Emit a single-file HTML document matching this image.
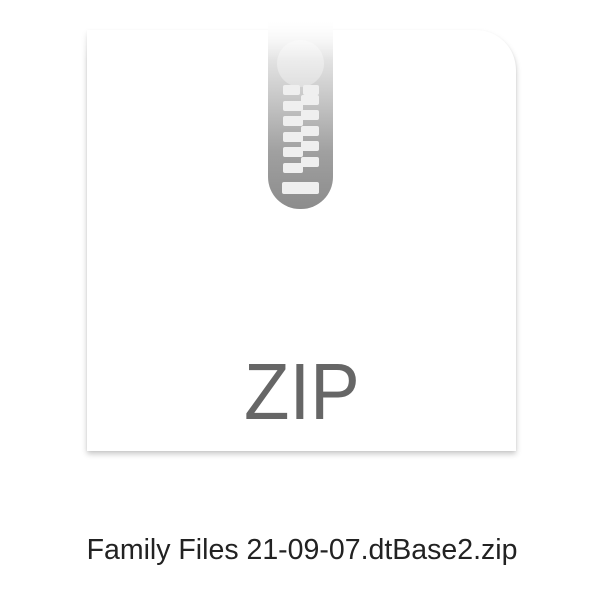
<!DOCTYPE html>
<html><head><style>
body{margin:0;width:600px;height:600px;background:#fff;position:relative;overflow:hidden;font-family:"Liberation Sans",sans-serif}
.page{position:absolute;left:87px;top:30px;width:429px;height:421px;background:#fff;border-top-right-radius:40px;box-shadow:0 3px 6px rgba(0,0,0,0.22),0 0 2px rgba(0,0,0,0.06)}
.fade{position:absolute;left:80px;top:0;width:445px;height:60px;background:linear-gradient(#fff 20%,rgba(255,255,255,0))}
.zip{position:absolute;left:268px;top:20px;width:65px;height:189px;border-radius:0 0 32px 32px;background:linear-gradient(#fff 0%,#d0d0d0 35%,#a0a0a0 70%,#8c8c8c 100%)}
.pull{position:absolute;left:277px;top:40px;width:47px;height:47px;border-radius:50%;background:rgba(255,255,255,0.35)}
.tooth{position:absolute;height:10px;width:20px;background:#efefef;border-radius:2px}
.zipt{position:absolute;left:244px;top:346px;font-size:80px;color:#666;transform:scaleX(0.93);transform-origin:left top}
.label{position:absolute;left:0;width:604px;top:534px;text-align:center;font-size:28.5px;color:#222}
</style></head><body>
<div class="page"></div>
<div class="zip"></div>
<div class="pull"></div>
<div class="tooth" style="left:283px;top:85px;width:17px"></div><div class="tooth" style="left:303px;top:85px;width:16px"></div>
<div class="tooth" style="left:283px;top:101px"></div><div class="tooth" style="left:301px;top:95px;width:18px"></div>
<div class="tooth" style="left:283px;top:116px"></div><div class="tooth" style="left:301px;top:110px;width:18px"></div>
<div class="tooth" style="left:283px;top:132px"></div><div class="tooth" style="left:301px;top:126px;width:18px"></div>
<div class="tooth" style="left:283px;top:147px"></div><div class="tooth" style="left:301px;top:141px;width:18px"></div>
<div class="tooth" style="left:283px;top:163px"></div><div class="tooth" style="left:301px;top:157px;width:18px"></div>
<div class="tooth" style="left:282px;top:182px;width:37px;height:12px"></div>
<div class="fade"></div>
<div class="zipt">ZIP</div>
<div class="label">Family Files 21-09-07.dtBase2.zip</div>
</body></html>
